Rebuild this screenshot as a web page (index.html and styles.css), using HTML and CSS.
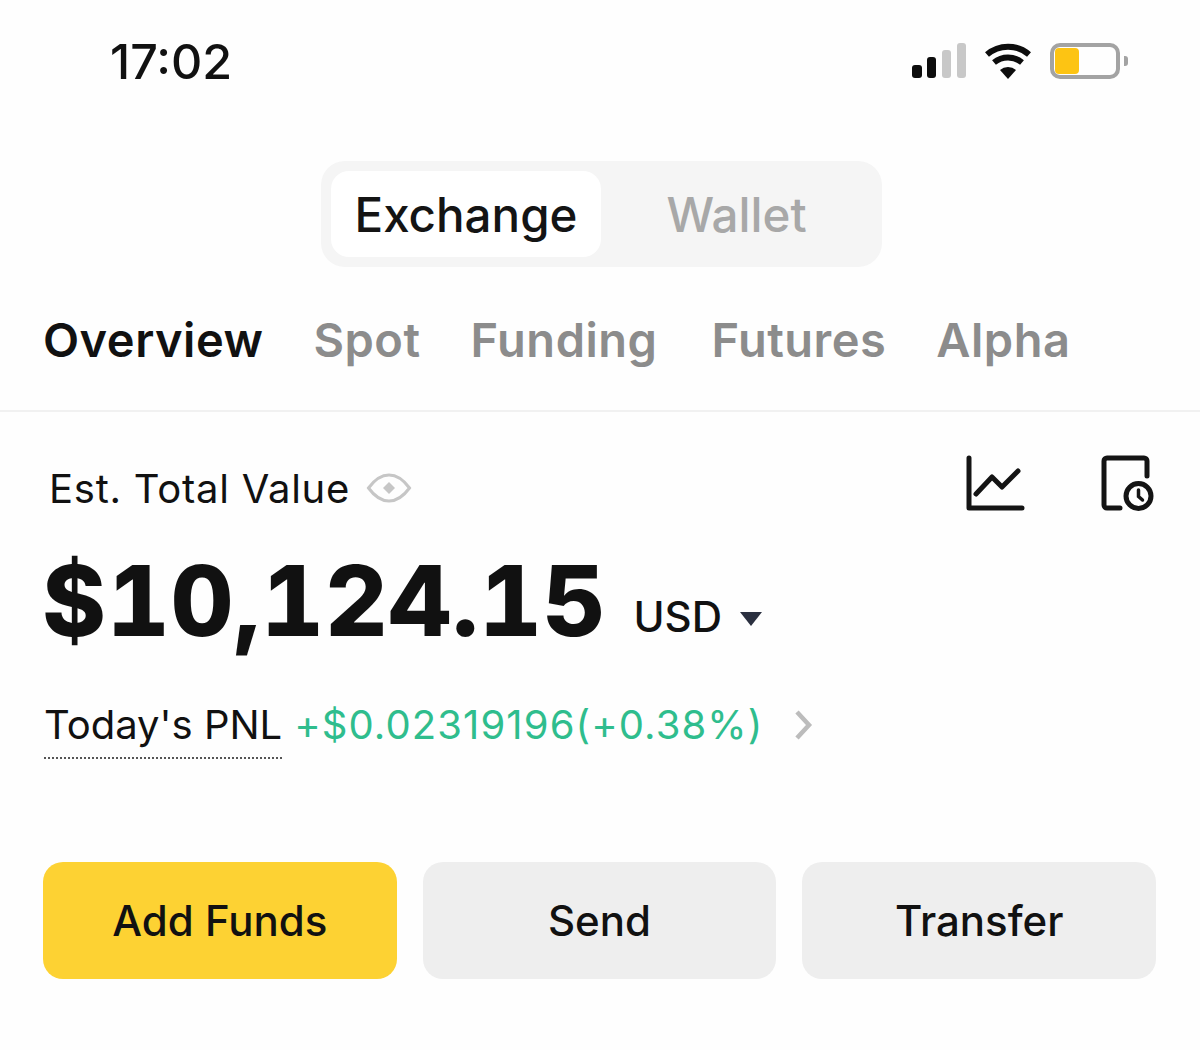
FILE: index.html
```html
<!DOCTYPE html>
<html>
<head>
<meta charset="utf-8">
<title>Assets Overview</title>
<link rel="stylesheet" href="styles.css">
</head>
<body>
    <div class="status-bar">
        <div class="time">17:02</div>
        <div class="status-icons">
            <svg class="signal" width="56" height="36" viewBox="0 0 56 36">
                <rect x="0" y="22" width="10" height="13" rx="3" fill="#0d0d0d"/>
                <rect x="15" y="14" width="9" height="21" rx="3" fill="#0d0d0d"/>
                <rect x="30" y="7" width="9" height="28" rx="3" fill="#c8c8c8"/>
                <rect x="45" y="0" width="9" height="35" rx="3" fill="#c8c8c8"/>
            </svg>
            <svg class="wifi" width="50" height="36" viewBox="0 0 50 36">
                <path d="M3 11.5A32 32 0 0 1 45 11.5" fill="none" stroke="#0d0d0d" stroke-width="6"/>
                <path d="M10 19.5A22 22 0 0 1 38 19.5" fill="none" stroke="#0d0d0d" stroke-width="6"/>
                <path d="M24 36L16 27A12 12 0 0 1 32 27Z" fill="#0d0d0d"/>
            </svg>
            <div class="battery">
                <div class="battery-level"></div>
            </div>
            <div class="battery-tip"></div>
        </div>
    </div>

    <div class="switch-row">
        <div class="switch">
            <div class="switch-item active">Exchange</div>
            <div class="switch-item">Wallet</div>
        </div>
    </div>

    <div class="tabs">
        <span class="tab active">Overview</span>
        <span class="tab">Spot</span>
        <span class="tab">Funding</span>
        <span class="tab">Futures</span>
        <span class="tab">Alpha</span>
    </div>

    <div class="balance">
        <div class="value-row">
            <div class="value-label">
                <span>Est. Total Value</span>
                <svg width="46" height="32" viewBox="0 0 46 32">
                    <path d="M2.5 16Q12 3 23 3T43.5 16Q34 29 23 29T2.5 16Z" fill="none" stroke="#c6c6c6" stroke-width="3"/>
                    <path d="M23 10L29 16L23 22L17 16Z" fill="#c6c6c6"/>
                </svg>
            </div>
            <div class="value-icons">
                <svg width="60" height="60" viewBox="0 0 60 60">
                    <path d="M3 3V53H56" fill="none" stroke="#141414" stroke-width="5" stroke-linecap="round" stroke-linejoin="round"/>
                    <path d="M10 39L26 22L36 32L52 16" fill="none" stroke="#141414" stroke-width="5" stroke-linecap="round" stroke-linejoin="round"/>
                </svg>
                <svg width="56" height="60" viewBox="0 0 56 60">
                    <path d="M20 53H7A3 3 0 0 1 4 50V6A3 3 0 0 1 7 3H44A3 3 0 0 1 47 6V21" fill="none" stroke="#141414" stroke-width="5" stroke-linecap="round"/>
                    <circle cx="38.5" cy="41" r="12.5" fill="none" stroke="#141414" stroke-width="5"/>
                    <path d="M38.5 35V41.5L42.5 45" fill="none" stroke="#141414" stroke-width="3.5" stroke-linecap="round"/>
                </svg>
            </div>
        </div>

        <div class="amount-row">
            <span class="amount">$10,124.15</span>
            <span class="currency">USD</span>
            <span class="caret"></span>
        </div>

        <div class="pnl-row">
            <span class="pnl-label">Today's PNL</span>
            <span class="pnl-value">+$0.02319196(+0.38%)</span>
            <svg width="20" height="32" viewBox="0 0 20 32">
                <path d="M2 3L14 16L2 29" fill="none" stroke="#bcbcbc" stroke-width="4.5"/>
            </svg>
        </div>
    </div>

    <div class="actions">
        <div class="action primary">Add Funds</div>
        <div class="action">Send</div>
        <div class="action">Transfer</div>
    </div>
</body>
</html>
```

FILE: styles.css
```css
body {
    margin: 0;
    background: #fefefe;
    color: #111111;
    font-family: "Inter", "Liberation Sans", sans-serif;
}

.status-bar {
    display: flex;
    justify-content: space-between;
    align-items: center;
    height: 122px;
    padding: 0 72px 0 110px;
}

.time {
    font-size: 48.5px;
    font-weight: 500;
}

.status-icons {
    display: flex;
    align-items: center;
}

.wifi {
    margin-left: 16px;
}

.battery {
    width: 60px;
    height: 26px;
    margin-left: 16px;
    padding: 1px;
    border: 4px solid #a3a3a3;
    border-radius: 10px;
}

.battery-level {
    width: 24px;
    height: 100%;
    background: #fdc413;
    border-radius: 4px;
}

.battery-tip {
    width: 4px;
    height: 10px;
    margin-left: 4px;
    background: #a3a3a3;
    border-radius: 0 3px 3px 0;
}

.switch-row {
    display: flex;
    justify-content: center;
    padding-top: 39px;
    padding-left: 3px;
}

.switch {
    display: flex;
    box-sizing: border-box;
    width: 561px;
    height: 106px;
    padding: 10px;
    background: #f5f5f5;
    border-radius: 24px;
}

.switch-item {
    display: flex;
    flex: 1;
    justify-content: center;
    align-items: center;
    color: #a8a8a8;
    font-size: 47.5px;
    font-weight: 500;
}

.switch-item.active {
    flex: none;
    width: 270px;
    background: #ffffff;
    border-radius: 18px;
    color: #141414;
}

.tabs {
    display: flex;
    gap: 50px;
    align-items: center;
    height: 141px;
    padding-top: 2px;
    padding-left: 43px;
    border-bottom: 2px solid #f1f1f1;
}

.tab {
    color: #8c8c8c;
    font-size: 47px;
    font-weight: 600;
    letter-spacing: 0.5px;
}

.tab:nth-child(4) {
    margin-left: 4px;
}

.tab.active {
    color: #111111;
}

.balance {
    padding: 0 44px;
}

.value-row {
    display: flex;
    justify-content: space-between;
    align-items: center;
    height: 100px;
    padding-top: 26px;
}

.value-label {
    display: flex;
    gap: 16px;
    align-items: center;
    padding-left: 5px;
    font-size: 40px;
    letter-spacing: 0.75px;
}

.value-icons {
    display: flex;
    gap: 74px;
    margin-bottom: 6px;
}

.amount-row {
    display: flex;
    align-items: center;
    height: 124px;
    margin-left: -2px;
}

.amount {
    font-size: 97px;
    font-weight: 800;
    font-variant-numeric: tabular-nums;
    letter-spacing: 1px;
}

.currency {
    margin-top: 32px;
    margin-left: 27px;
    font-size: 42px;
    font-weight: 500;
}

.caret {
    width: 0;
    height: 0;
    margin-top: 37px;
    margin-left: 18px;
    border-top: 14px solid #2b3040;
    border-left: 11px solid transparent;
    border-right: 11px solid transparent;
}

.pnl-row {
    display: flex;
    align-items: center;
    margin-top: 38px;
    font-size: 40px;
}

.pnl-label {
    padding-bottom: 8px;
    border-bottom: 2px dotted #555555;
}

.pnl-value {
    margin-left: 12px;
    margin-bottom: 10px;
    color: #2fbd8d;
    letter-spacing: 1.1px;
}

.pnl-row svg {
    margin-left: 32px;
    margin-bottom: 10px;
}

.actions {
    display: grid;
    grid-template-columns: repeat(3, 1fr);
    gap: 26px;
    margin-top: 103px;
    padding: 0 44px 0 43px;
}

.action {
    display: flex;
    justify-content: center;
    align-items: center;
    height: 117px;
    background: #eeeeee;
    border-radius: 20px;
    font-size: 42px;
    font-weight: 500;
}

.action.primary {
    background: #fdd233;
}
```
